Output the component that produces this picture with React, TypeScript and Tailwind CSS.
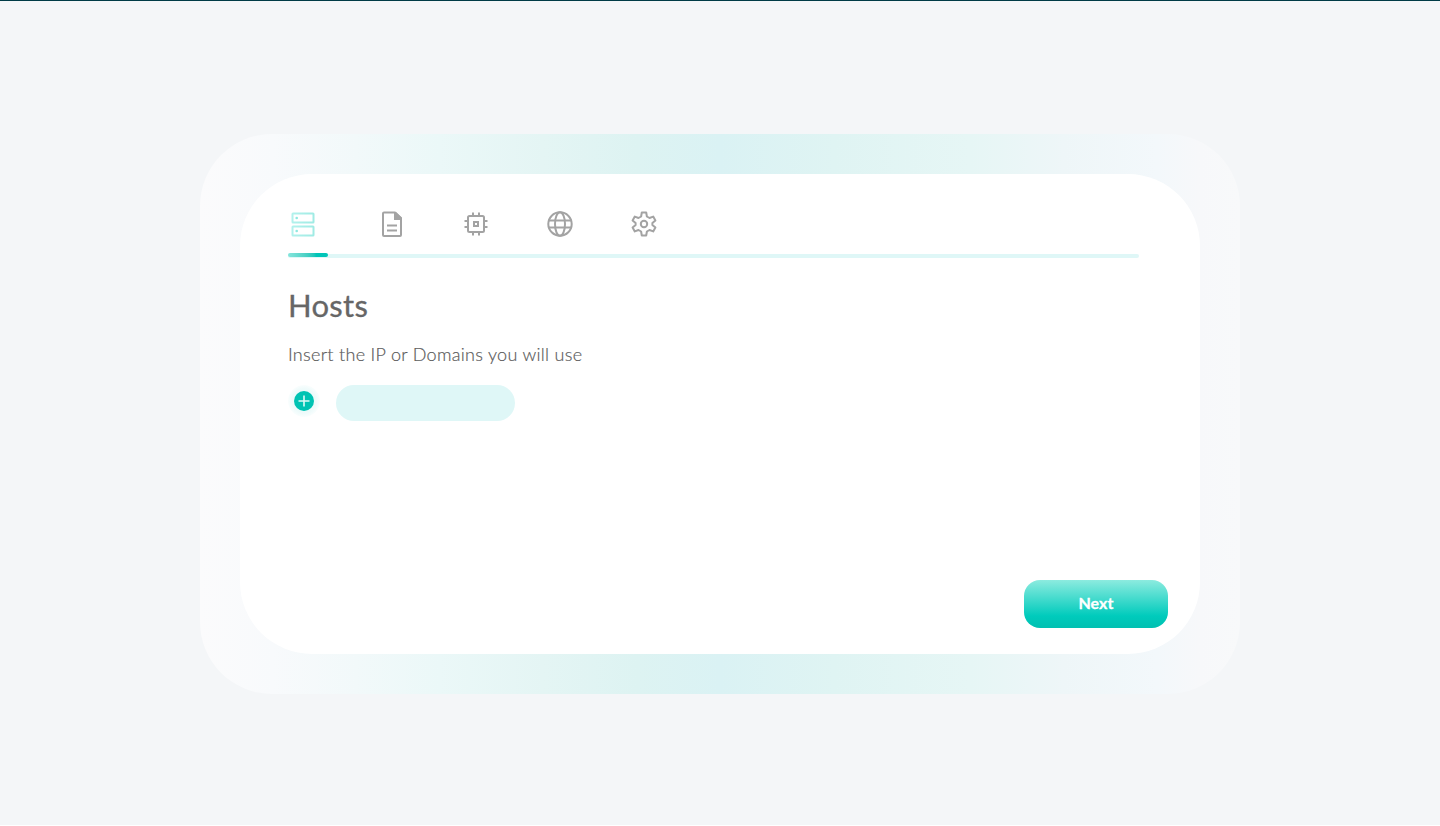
import type { ReactNode } from "react";

function ServerIcon() {
  return (
    <svg width="32" height="32" viewBox="0 0 32 32" fill="none" stroke="url(#mint)" strokeWidth="2">
      <defs>
        <linearGradient id="mint" gradientUnits="userSpaceOnUse" x1="3" y1="0" x2="27" y2="0">
          <stop stopColor="#b4f2ed" />
          <stop offset="1" stopColor="#a0ebe4" />
        </linearGradient>
      </defs>
      <rect x="5.5" y="5.5" width="21" height="9" rx="0.5" />
      <rect x="5.5" y="18.5" width="21" height="9" rx="0.5" />
      <circle cx="9.7" cy="10" r="1.3" fill="#8fe9e1" stroke="none" />
      <circle cx="9.7" cy="23" r="1.3" fill="#8fe9e1" stroke="none" />
    </svg>
  );
}

function GrayIcon({ children }: { children: ReactNode }) {
  return (
    <svg width="32" height="32" viewBox="0 0 32 32" fill="none" stroke="#a3a3a3" strokeWidth="2">
      {children}
    </svg>
  );
}

function Steps() {
  return (
    <nav className="flex h-8">
      <div className="-ml-px mr-[57px]"><ServerIcon /></div>
      <div className="mr-[52px]">
        <GrayIcon>
          <path d="M19 4.5H8a1 1 0 0 0-1 1v21.5a1 1 0 0 0 1 1h16a1 1 0 0 0 1-1V10z" strokeLinejoin="round" />
          <path d="M18 4h2l6 6v2h-8z" fill="#a3a3a3" stroke="none" />
          <path d="M11 17.5h10M11 22.5h10" />
        </GrayIcon>
      </div>
      <div className="mr-[52px]">
        <GrayIcon>
          <rect x="8" y="8" width="16" height="16" rx="1.5" />
          <rect x="14" y="14" width="4" height="4" />
          <path d="M13 8V4.5M19 8V4.5M13 24v3.5M19 24v3.5M8 13H4.5M8 19H4.5M24 13h3.5M24 19h3.5" />
        </GrayIcon>
      </div>
      <div className="mr-[52px]">
        <GrayIcon>
          <circle cx="16" cy="16" r="11.7" />
          <ellipse cx="16" cy="16" rx="5" ry="11.7" />
          <path d="M4.5 12.5h23M4.5 19.5h23" />
        </GrayIcon>
      </div>
      <div>
        <GrayIcon>
          <path
            d="M13.8 4.5h4.4l.7 4 2.6 1.5 3.7-1.4 2.2 3.8-3 2.6v2l3 2.6-2.2 3.8-3.7-1.4-2.6 1.5-.7 4h-4.4l-.7-4-2.6-1.5-3.7 1.4-2.2-3.8 3-2.6v-2l-3-2.6 2.2-3.8 3.7 1.4 2.6-1.5z"
            strokeLinejoin="round"
          />
          <circle cx="16" cy="16" r="3.2" />
        </GrayIcon>
      </div>
    </nav>
  );
}

export default function App() {
  return (
    <main className="flex h-[825px] flex-col items-center border-t border-[#003b46] bg-[#f4f6f8] pt-[133px] font-['Lato',sans-serif] text-[#666]">
      <section className="h-[560px] w-[1040px] rounded-[72px] bg-[linear-gradient(90deg,#fbfbfc_0%,#f8fafc_7%,#f2f9fa_15%,#ebf8f8_23%,#e4f5f4_33%,#ddf3f2_42%,#daf2f4_50%,#dff4f3_61%,#e6f6f5_74%,#eef6f8_83%,#f3f8fb_92%,#f7f8fa_96%,#f8f9fa_100%)] p-10">
        <div className="flex h-[480px] flex-col rounded-[72px] bg-white pl-12 pr-8 pt-[34px]">
          <Steps />
          <div className="mt-[13px] h-[5px] w-[851px]">
            <div className="mt-px flex h-1 items-end rounded-[2px] bg-[#dff7f7]">
              <div className="h-1 w-10 -translate-y-px rounded-[2px] bg-gradient-to-r from-[#84e5dc] to-[#00c5b8] to-70%" />
            </div>
          </div>
          <h1 className="mt-[27px] h-10 whitespace-nowrap text-[31px] leading-10 tracking-[0.3px] [-webkit-text-stroke:0.3px_#666]">Hosts</h1>
          <p className="mt-[17px] h-6 whitespace-nowrap text-[18px] font-light leading-6 tracking-[0.3px] text-[#5c5c5c] [-webkit-text-stroke:0.2px_#5c5c5c]">Insert the IP or Domains you will use</p>
          <div className="mt-[19px] flex h-9 gap-4">
            <button aria-label="Add host" className="flex size-8 items-center justify-center rounded-full bg-[radial-gradient(circle,#dff7f7_0%,#effbfb_55%,#ffffff_78%)]">
              <svg width="20" height="20" viewBox="0 0 20 20" fill="none">
                <circle cx="10" cy="10" r="10" fill="#00c3b3" />
                <path d="M10 4.5v11M4.5 10h11" stroke="#dffaf7" strokeWidth="1.6" />
              </svg>
            </button>
            <input aria-label="Host" className="h-9 w-[179px] rounded-full bg-[#dff7f7] px-4 outline-none" />
          </div>
          <button className="mt-[159px] h-12 w-36 shrink-0 self-end rounded-2xl bg-[linear-gradient(180deg,#8cebdf_0%,#00cbbc_75%,#00c0b1_100%)] pb-0.5 text-base font-bold tracking-[0.1px] text-white [-webkit-text-stroke:0.3px_#fff]">Next</button>
        </div>
      </section>
    </main>
  );
}
